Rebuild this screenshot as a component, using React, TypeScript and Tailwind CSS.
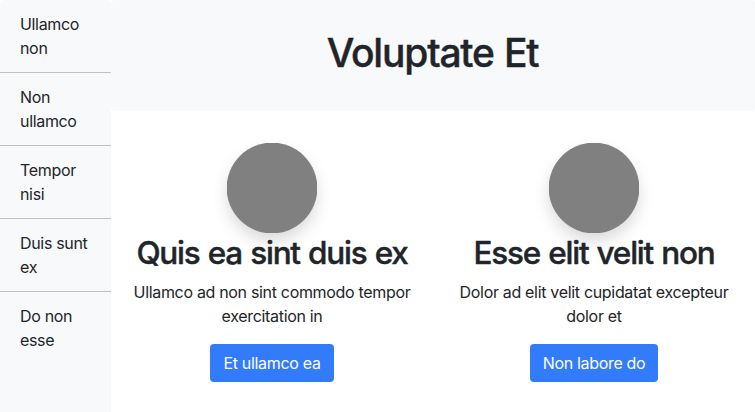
const items = ['Ullamco non', 'Non ullamco', 'Tempor nisi', 'Duis sunt ex', 'Do non esse'];
const cards = [
  { title: 'Quis ea sint duis ex', text: 'Ullamco ad non sint commodo tempor exercitation in', button: 'Et ullamco ea' },
  { title: 'Esse elit velit non', text: 'Dolor ad elit velit cupidatat excepteur dolor et', button: 'Non labore do' },
];

export default function App() {
  return (
    <div className="flex h-[412px] w-[755px] overflow-hidden bg-white font-[Inter,'Liberation_Sans',sans-serif] text-base leading-6 text-[#212529]">
      <aside className="w-[111px] shrink-0 rounded-t bg-[#f8f9fa]">
        {items.map((item) => (
          <div key={item} className="border-b border-[#bfc0c2] py-3 pl-5 pr-5 tracking-[-0.33px] last:border-b-0">
            {item}
          </div>
        ))}
      </aside>
      <main className="min-w-0 flex-1">
        <header className="flex h-[111px] items-center justify-center rounded bg-[#f8f9fa] pb-[5px]">
          <h1 className="pr-px text-[39px] leading-[48px] font-medium tracking-[-1.2px] [-webkit-text-stroke:0.4px] [word-spacing:1px]">Voluptate Et</h1>
        </header>
        <div className="grid grid-cols-2 pt-8">
          {cards.map((card) => (
            <section key={card.title} className="flex flex-col items-center px-3 text-center">
              <div className="size-[90px] rounded-full shadow-[0_8px_16px_rgba(0,0,0,0.15)]">
                <svg className="block size-[90px] overflow-hidden" viewBox="0 0 90 90" fill="#808080">
                  <circle cx="45" cy="45" r="45.4" />
                </svg>
              </div>
              <h2 className="mb-[7px] text-[31.5px] leading-[40px] font-medium whitespace-nowrap tracking-[-1.22px] [-webkit-text-stroke:0.4px] [word-spacing:1px]">{card.title}</h2>
              <p className="mb-4 tracking-[-0.32px]">{card.text}</p>
              <button className="h-[38px] rounded bg-[#327bfb] px-[13px] tracking-[-0.32px] text-white">{card.button}</button>
            </section>
          ))}
        </div>
      </main>
    </div>
  );
}
